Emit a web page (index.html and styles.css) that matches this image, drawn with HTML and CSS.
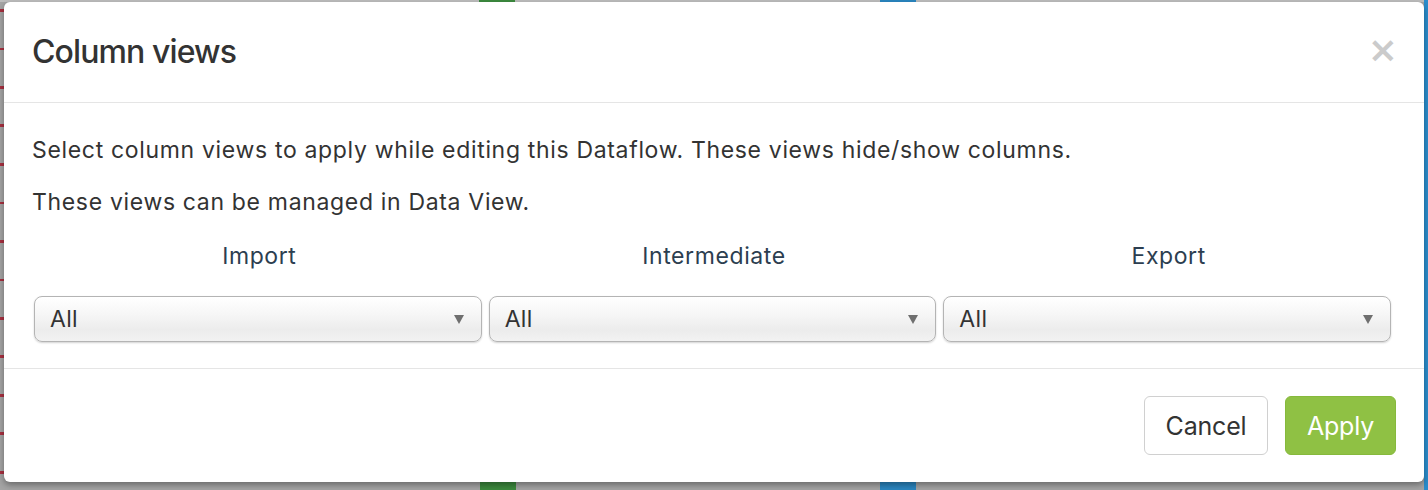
FILE: index.html
```html
<!DOCTYPE html>
<html>
<head>
<meta charset="utf-8">
<link rel="stylesheet" href="styles.css">
</head>
<body>
<div class="backdrop">
  <div class="modal">
    <div class="modal-header">
      <h4 class="modal-title">Column views</h4>
      <span class="close">×</span>
    </div>
    <div class="modal-body">
      <p class="line">Select column views to apply while editing this Dataflow. These views hide/show columns.</p>
      <p class="line second">These views can be managed in Data View.</p>
      <div class="cols">
        <div class="col">
          <div class="label">Import</div>
          <div class="select"><span>All</span><span class="caret"></span></div>
        </div>
        <div class="col">
          <div class="label">Intermediate</div>
          <div class="select"><span>All</span><span class="caret"></span></div>
        </div>
        <div class="col">
          <div class="label">Export</div>
          <div class="select"><span>All</span><span class="caret"></span></div>
        </div>
      </div>
    </div>
    <div class="modal-footer">
      <button class="btn btn-default">Cancel</button>
      <button class="btn btn-apply">Apply</button>
    </div>
  </div>
</div>
</body>
</html>
```

FILE: styles.css
```css
* { box-sizing: border-box; }
html, body { margin: 0; padding: 0; }
body {
  width: 1428px;
  height: 490px;
  overflow: hidden;
  font-family: Inter, "Noto Sans", sans-serif;
  background-color: #a4a4a4;
  background-image:
    linear-gradient(#3c8a3e, #3c8a3e),
    linear-gradient(#2a86c0, #2a86c0),
    linear-gradient(#3c8a3e, #3c8a3e),
    linear-gradient(#2a86c0, #2a86c0),
    linear-gradient(#2a8ccb, #2a8ccb),
    repeating-linear-gradient(180deg, transparent 0 9px, #a8303f 9px 12px, transparent 12px 38.5px),
    linear-gradient(180deg, #bdbdbd 0 2px, transparent 2px);
  background-size:
    36px 3px, 36px 3px, 36px 8px, 36px 8px, 4px 490px, 4px 490px, 1428px 490px;
  background-position:
    479px 0, 880px 0, 480px 482px, 880px 482px, 1424px 0, 0 0, 0 0;
  background-repeat: no-repeat;
}
.backdrop {
  padding: 2px 4px 0 4px;
}
.modal {
  width: 1420px;
  height: 480px;
  background: #fff;
  border-radius: 6px;
  box-shadow: 0 3px 6px rgba(0,0,0,0.35);
  display: flex;
  flex-direction: column;
}
.modal-header {
  height: 101px;
  border-bottom: 1px solid #e5e5e5;
  display: flex;
  align-items: center;
  justify-content: space-between;
  padding: 0 28px;
}
.modal-title {
  margin: 0;
  font-size: 32px;
  font-weight: 500;
  color: #333;
  letter-spacing: -0.9px;
  padding-bottom: 1px;
}
.close {
  font-family: "DejaVu Sans", sans-serif;
  font-size: 36px;
  font-weight: bold;
  color: #cbcbcb;
  line-height: 1;
  margin-right: -2px;
  margin-bottom: 4px;
}
.modal-body {
  height: 265px;
  padding: 0 28px;
  color: #333;
}
.line {
  margin: 0;
  font-size: 23px;
  line-height: 28px;
  letter-spacing: 0.67px;
  padding-top: 33px;
}
.line.second {
  padding-top: 24px;
}
.cols {
  display: flex;
  margin-top: 26px;
}
.col {
  flex: 1;
  display: flex;
  flex-direction: column;
}
.label {
  text-align: center;
  font-size: 23px;
  line-height: 28px;
  letter-spacing: 0.6px;
  color: #2c3e50;
}
.select {
  margin: 26px 5px 0 2px;
  height: 46px;
  border: 1px solid #b4b4b4;
  border-radius: 8px;
  background: linear-gradient(180deg, #ffffff 0%, #f6f6f6 40%, #ececec 75%, #f2f2f2 100%);
  box-shadow: 0 1px 2px rgba(0,0,0,0.18);
  display: flex;
  align-items: center;
  justify-content: space-between;
  padding: 0 17px 0 15px;
  font-size: 23px;
  letter-spacing: 0.3px;
  color: #333;
}
.caret {
  width: 0;
  height: 0;
  border-left: 5px solid transparent;
  border-right: 5px solid transparent;
  border-top: 9px solid #6f6f6f;
  margin-top: 1px;
}
.modal-footer {
  flex: 1;
  border-top: 1px solid #e5e5e5;
  display: flex;
  justify-content: flex-end;
  align-items: flex-start;
  gap: 17px;
  padding: 27px 28px 0 28px;
}
.btn {
  font-family: Inter, "Noto Sans", sans-serif;
  font-size: 25px;
  letter-spacing: -0.2px;
  height: 59px;
  border-radius: 6px;
  padding: 0;
  cursor: pointer;
}
.btn-default {
  background: #fff;
  border: 1px solid #d0d0d0;
  color: #333;
  width: 124px;
}
.btn-apply {
  background: #8fc144;
  border: 1px solid #86b93c;
  color: #fff;
  width: 111px;
}
```
